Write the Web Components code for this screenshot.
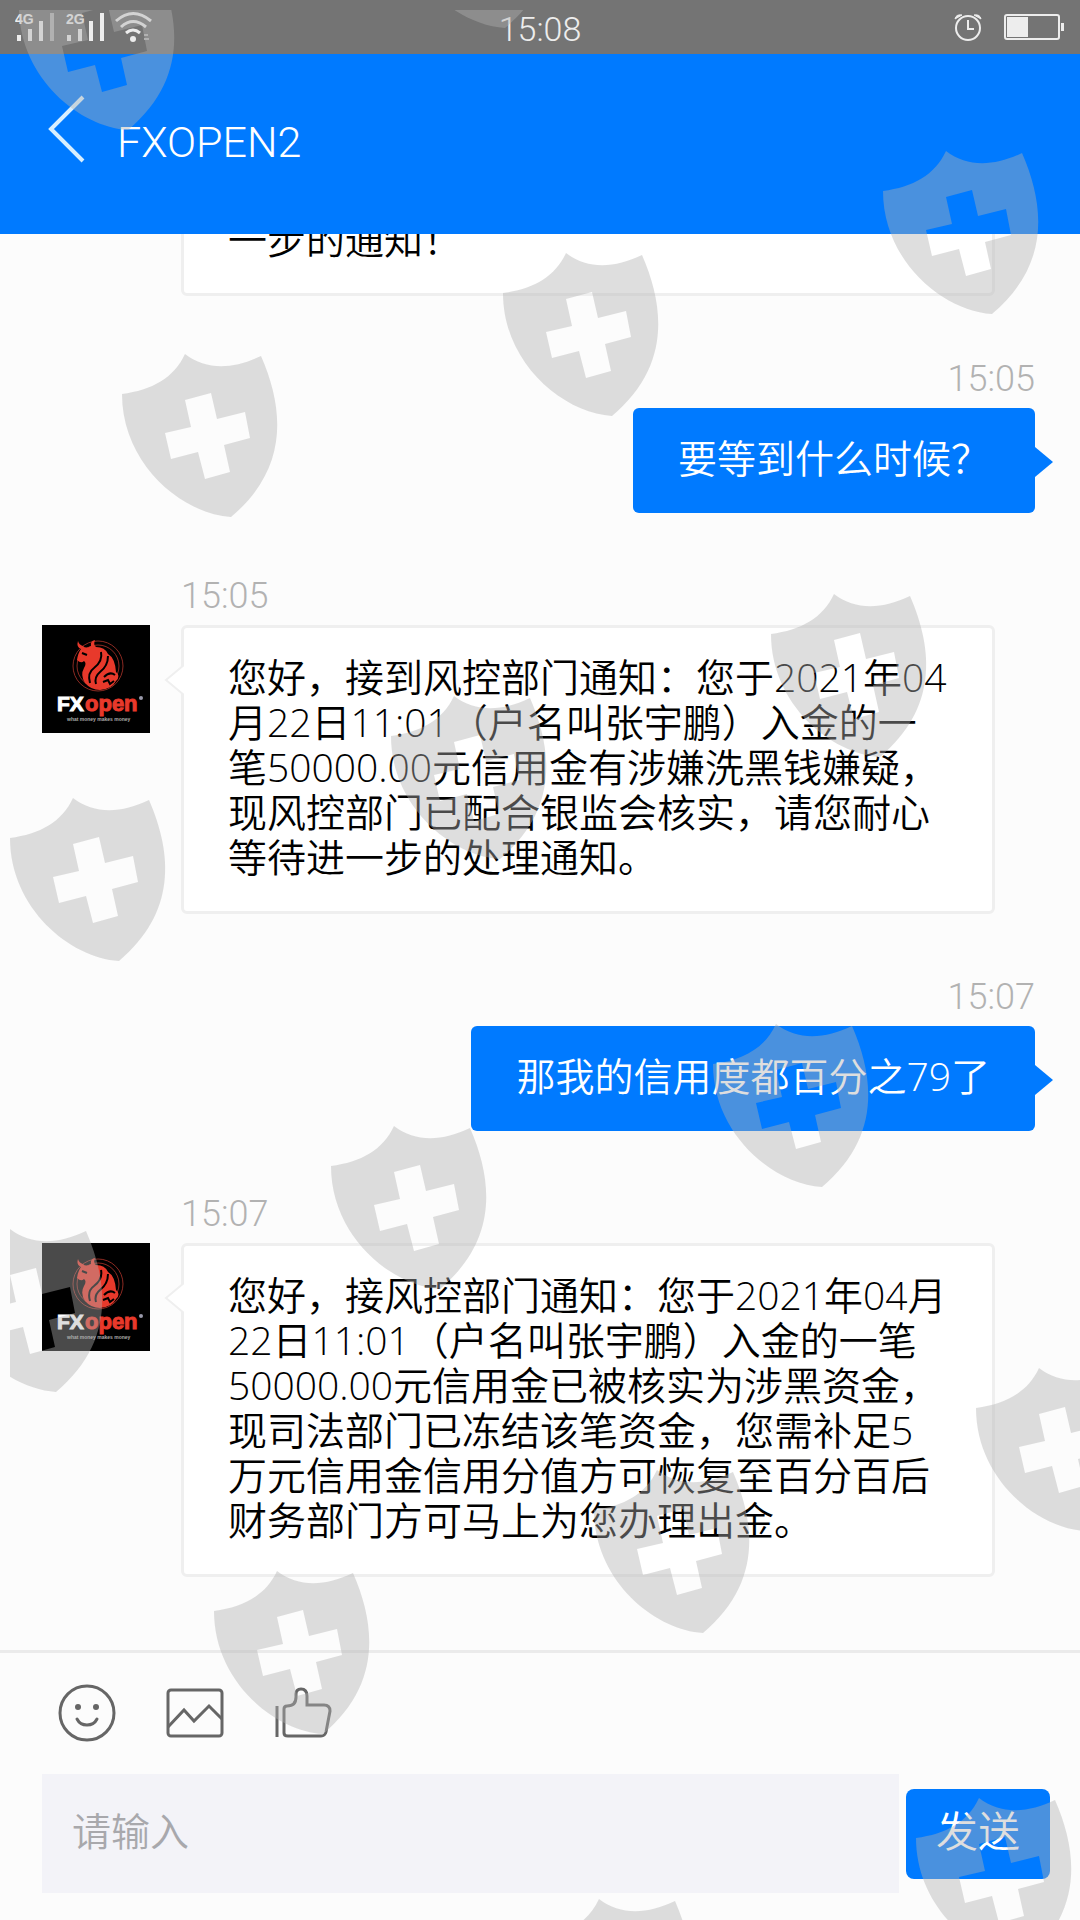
<!DOCTYPE html>
<html lang="zh-CN">
<head>
<meta charset="utf-8">
<meta name="viewport" content="width=device-width, initial-scale=1">
<title>FXOPEN2</title>
<style>
  html, body {
    height: 100%;
    margin: 0;
  }
  body {
    background: #fcfcfc;
    font-family: Roboto, "Noto Sans CJK SC", sans-serif;
    font-weight: 350;
  }
</style>
</head>
<body>
<chat-app>
  <status-bar slot="top" time="15:08"></status-bar>
  <chat-header slot="top">FXOPEN2</chat-header>

  <chat-message from="agent" continued>一步的通知！</chat-message>
  <chat-message from="me" time="15:05">要等到什么时候？</chat-message>
  <chat-message from="agent" time="15:05">您好，接到风控部门通知：您于2021年04月22日11:01（户名叫张宇鹏）入金的一笔50000.00元信用金有涉嫌洗黑钱嫌疑，现风控部门已配合银监会核实，请您耐心等待进一步的处理通知。</chat-message>
  <chat-message from="me" time="15:07">那我的信用度都百分之79了</chat-message>
  <chat-message from="agent" time="15:07">您好，接风控部门通知：您于2021年04月22日11:01（户名叫张宇鹏）入金的一笔50000.00元信用金已被核实为涉黑资金，现司法部门已冻结该笔资金，您需补足5万元信用金信用分值方可恢复至百分百后财务部门方可马上为您办理出金。</chat-message>

  <chat-composer slot="bottom"></chat-composer>
  <shield-watermark slot="overlay"></shield-watermark>
</chat-app>

<script>
// small helper so every element sets up its shadow root the same way
class BaseElement extends HTMLElement {
  render(html) {
    const template = document.createElement('template');
    template.innerHTML = html;
    this.attachShadow({ mode: 'open' });
    this.shadowRoot.appendChild(template.content.cloneNode(true));
  }
}

class ChatApp extends BaseElement {
  constructor() {
    super();
    this.render(`
      <style>
        :host {
          display: flex;
          flex-direction: column;
          position: relative;
          height: 100vh;
          overflow: hidden;
        }
        main {
          flex: 1;
          min-height: 0;
          display: flex;
          flex-direction: column;
          justify-content: flex-end; /* newest message stays at the bottom */
          gap: 60px;
          padding: 0 45px 73px 42px;
          overflow: hidden;
        }
      </style>
      <slot name="top"></slot>
      <main><slot></slot></main>
      <slot name="bottom"></slot>
      <slot name="overlay"></slot>
    `);
  }
}

class StatusBar extends BaseElement {
  constructor() {
    super();
    this.render(`
      <style>
        :host {
          display: grid;
          grid-template-columns: 1fr auto 1fr;
          align-items: center;
          height: 54px;
          flex: none;
          padding: 0 15px;
          background: #747474;
          color: #ededed;
        }
        svg { display: block; }
        .time { font-size: 34px; line-height: 50px; padding-top: 4px; }
        .right { display: flex; gap: 22px; justify-content: flex-end; }
        text { font: 700 14px "Liberation Sans", sans-serif; }
      </style>
      <svg width="138" height="54" fill="#ededed">
        <text x="0" y="24">4G</text>
        <path d="M2 35h4v6h-4z M13 29h4v12h-4z M24 21h4v20h-4z"/>
        <path d="M35 13h4v28h-4z" opacity=".5"/>
        <text x="51" y="24">2G</text>
        <path d="M52 35h4v6h-4z M63 29h4v12h-4z M74 21h4v20h-4z M85 13h4v28h-4z"/>
        <g fill="none" stroke="#ededed" stroke-width="3">
          <path d="M101 21Q118 6 136 21"/>
          <path d="M106 27Q118 16 131 27"/>
          <path d="M111 33Q118 27 125 33"/>
        </g>
        <circle cx="118" cy="39" r="3"/>
        <path d="M129 34h4v2h-4z M129 38h5v2h-5z" opacity=".5"/>
      </svg>
      <span class="time"></span>
      <div class="right">
        <svg width="28" height="54" fill="none" stroke="#ededed" stroke-width="2">
          <circle cx="14" cy="28" r="12"/>
          <path d="M14 20v9h6"/>
          <path d="M1 19q1-5 7-4z M27 19q-1-5-7-4z" fill="#ededed" stroke-width="1"/>
        </svg>
        <svg width="61" height="54" fill="#ededed">
          <rect x="1" y="15" width="54" height="24" rx="2" fill="none" stroke="#ededed" stroke-width="2"/>
          <path d="M3 17h21v20h-21z M57 23h3v8h-3z"/>
        </svg>
      </div>
    `);
    this.shadowRoot.querySelector('.time').textContent = this.getAttribute('time');
  }
}

class ChatHeader extends BaseElement {
  constructor() {
    super();
    this.render(`
      <style>
        :host {
          display: flex;
          align-items: center;
          gap: 30px;
          height: 180px;
          box-sizing: border-box;
          flex: none;
          padding: 0 45px 4px;
          background: #007aff;
          color: #fff;
        }
        button {
          padding: 0;
          border: 0;
          background: none;
          line-height: 0;
        }
        svg { display: block; margin-bottom: 26px; }
        h1 { margin: 0; font-size: 43px; line-height: 60px; font-weight: inherit; }
      </style>
      <button aria-label="返回">
        <svg width="42" height="70" fill="none" stroke="#d8efff" stroke-width="4">
          <path d="M38 3L6 35L38 67"/>
        </svg>
      </button>
      <h1><slot></slot></h1>
    `);
  }
}

class BrandAvatar extends BaseElement {
  constructor() {
    super();
    this.render(`
      <style>
        :host { display: block; width: 108px; height: 108px; }
        svg { display: block; background: #000; }
        text { font-family: "Liberation Sans", sans-serif; font-weight: 700; }
      </style>
      <svg width="108" height="108" viewBox="0 0 108 108">
        <circle cx="56" cy="41" r="25" fill="none" stroke="#8c2a22"/>
        <circle cx="56" cy="41" r="21" fill="none" stroke="#8c2a22"/>
        <path d="M36 16Q34 22 39 24Q36 28 35 35Q39 39 42 36Q45 38 42 43Q38 50 43 58Q49 65 58 65Q70 64 74 56Q79 51 74 47Q73 33 66 29Q63 22 54 22Q51 20 53 15Q48 16 49 21Q44 24 41 21Q37 20 36 16Z" fill="#e8392b"/>
        <path d="M59 27Q61 36 52 43Q45 48 48 58M66 31Q66 41 58 47Q52 52 54 59M40 28l5 2M62 52q6-6 11-2M61 57l5-2 2 4 4-3" fill="none" stroke="#000" stroke-width="2"/>
        <text x="15" y="86" font-size="21" fill="#fff" stroke="#fff">FX</text>
        <text x="43" y="86" font-size="22" fill="#e8392b" stroke="#e8392b">open</text>
        <text x="25" y="96" font-size="5" fill="#aaa">what money makes money</text>
        <circle cx="99" cy="73" r="2" fill="#99a"/>
      </svg>
    `);
  }
}

class ChatMessage extends BaseElement {
  constructor() {
    super();
    this.render(`
      <style>
        :host { display: flex; flex: none; flex-direction: column; align-items: flex-end; }
        time {
          margin-bottom: 5px;
          color: #b2b2b2;
          font-size: 36px;
          line-height: 47px;
        }
        .row { display: flex; align-items: flex-start; gap: 31px; }
        .bubble {
          position: relative;
          padding: 27px 45px 33px;
          border-radius: 6px;
          background: #007aff;
          color: #fff;
          font-family: "Open Sans", "Noto Sans CJK SC", sans-serif;
          font-size: 39px;
          line-height: 45px;
        }
        .arrow { position: absolute; top: 38px; left: 100%; fill: #007aff; }
        brand-avatar { display: none; }

        :host([from="agent"]) { align-items: stretch; padding-right: 40px; }
        :host([from="agent"]) time { margin-left: 139px; }
        :host([from="agent"]) .bubble {
          flex: 1;
          padding: 26px 43px 32px 44px;
          border: 3px solid #efefef;
          background: #fff;
          color: #000;
        }
        :host([from="agent"]) brand-avatar { display: block; }
        :host([from="agent"]) .arrow {
          top: 36px;
          left: -20px;
          transform: scaleX(-1);
          fill: #fff;
          stroke: #efefef;
          stroke-width: 2;
        }

        /* scrolled under the header: only the tail of the bubble shows */
        :host([continued]) time { display: none; }
        :host([continued]) .row { margin-left: 139px; }
        :host([continued]) brand-avatar, :host([continued]) .arrow { display: none; }
      </style>
      <time></time>
      <div class="row">
        <brand-avatar></brand-avatar>
        <div class="bubble">
          <slot></slot>
          <svg class="arrow" width="20" height="32"><path d="M0 1L18 16L0 31"/></svg>
        </div>
      </div>
    `);
    this.shadowRoot.querySelector('time').textContent = this.getAttribute('time') || '';
  }
}

class ChatComposer extends BaseElement {
  constructor() {
    super();
    this.render(`
      <style>
        :host {
          display: block;
          flex: none;
          padding: 31px 30px 27px 42px;
          border-top: 3px solid #ebebeb;
          background: #fcfcfc;
        }
        .tools { display: flex; gap: 50px; padding-left: 16px; margin-bottom: 32px; }
        .tools button { padding: 0; border: 0; background: none; }
        .tools svg { display: block; fill: none; stroke: #666; stroke-width: 3; }
        form { display: flex; align-items: center; gap: 7px; margin: 0; }
        input {
          flex: 1;
          min-width: 0;
          box-sizing: border-box;
          height: 119px;
          padding: 0 30px 2px;
          border: 0;
          border-radius: 0;
          background: #f3f3f8;
          font: inherit;
          font-size: 39px;
        }
        input::placeholder { color: #a8a8ac; opacity: 1; }
        .send {
          width: 144px;
          height: 90px;
          padding: 0 0 10px;
          border: 0;
          border-radius: 8px;
          background: #007aff;
          color: #fff;
          font: inherit;
          font-size: 42px;
        }
      </style>
      <div class="tools">
        <button type="button" aria-label="表情">
          <svg width="58" height="58">
            <circle cx="29" cy="29" r="27"/>
            <path d="M19 35Q22 41 29 41Q36 41 39 35" stroke-linecap="round"/>
            <circle cx="20" cy="23" r="3" fill="#666" stroke="none"/>
            <circle cx="38" cy="23" r="3" fill="#666" stroke="none"/>
          </svg>
        </button>
        <button type="button" aria-label="图片">
          <svg width="58" height="58">
            <rect x="2" y="6" width="54" height="46" rx="3"/>
            <path d="M2 43L18 26L28 37L43 22L56 35"/>
          </svg>
        </button>
        <button type="button" aria-label="点赞">
          <svg width="58" height="58">
            <path d="M3 22V53"/>
            <path d="M10 25Q10 22 13 22Q22 22 22 13V10Q22 5 27 5Q33 5 33 12V21H50Q56 21 56 27L52 48Q51 52 47 52H14Q10 52 10 49Z"/>
          </svg>
        </button>
      </div>
      <form>
        <input type="text" placeholder="请输入" aria-label="请输入">
        <button class="send" type="button">发送</button>
      </form>
    `);
  }
}

class ShieldWatermark extends BaseElement {
  constructor() {
    super();
    const spots = [
      [19, -33], [396, -135], [122, 354], [503, 253], [883, 151],
      [10, 798], [391, 696], [771, 594], [-53, 1229], [331, 1126],
      [713, 1024], [214, 1571], [594, 1470], [976, 1368], [536, 1899], [916, 1798]
    ];
    this.render(`
      <style>
        /* overlay starts 10px in from the top left corner */
        :host {
          position: absolute;
          inset: 10px 0 0 10px;
          overflow: hidden;
          pointer-events: none;
        }
        svg { display: block; width: 100%; height: 100%; }
      </style>
      <svg aria-hidden="true">
        <defs>
          <path id="shield" fill-rule="evenodd" fill="#b1b1b1" fill-opacity=".42" d="M0 40C30 36 52 24 63 0C85 17 112 15 139 2C163 57 166 115 109 163C60 160 0 110 0 40Z
            M63 46L89 39L95 65L123 58L128 84L102 91L108 118L83 125L76 98L49 105L43 79L69 73Z"/>
        </defs>
        <g transform="translate(-10 -10)">
          ${spots.map(([x, y]) => `<use href="#shield" x="${x}" y="${y}"/>`).join('')}
        </g>
      </svg>
    `);
  }
}

customElements.define('brand-avatar', BrandAvatar);
customElements.define('status-bar', StatusBar);
customElements.define('chat-header', ChatHeader);
customElements.define('chat-message', ChatMessage);
customElements.define('chat-composer', ChatComposer);
customElements.define('shield-watermark', ShieldWatermark);
customElements.define('chat-app', ChatApp);
</script>
</body>
</html>
